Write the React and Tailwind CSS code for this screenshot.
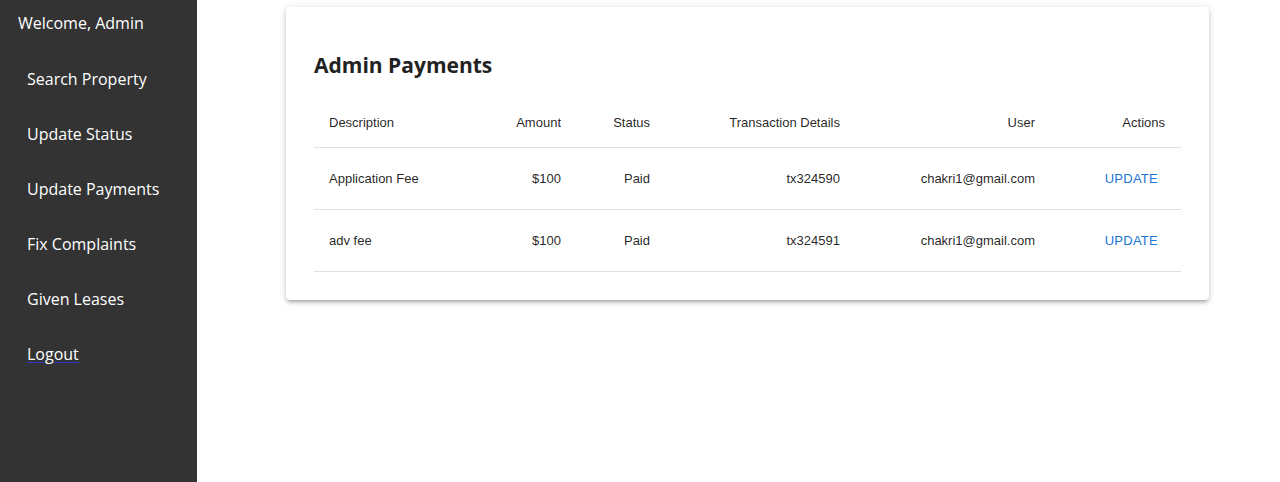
const navItems = [
  "Search Property",
  "Update Status",
  "Update Payments",
  "Fix Complaints",
  "Given Leases",
];

const payments = [
  { id: 1, description: "Application Fee", amount: "$100", status: "Paid", tx: "tx324590", user: "chakri1@gmail.com" },
  { id: 2, description: "adv fee", amount: "$100", status: "Paid", tx: "tx324591", user: "chakri1@gmail.com" },
];

const cols = "grid grid-cols-[166px_96px_89px_190px_195px_130px]";

const App = () => {
  return (
    <div className="min-h-screen h-[482px] flex bg-white font-['Open_Sans',sans-serif]">
      <aside className="w-[197px] shrink-0 bg-[#333333] text-white text-[16px]">
        <div className="pl-[18px] pt-[11px] h-[51px]">Welcome, Admin</div>
        <nav className="flex flex-col">
          {navItems.map((item) => (
            <div key={item} className="pl-[27px] h-[55px] flex items-center">
              {item}
            </div>
          ))}
          <div className="pl-[27px] h-[55px] flex items-center">
            <span className="underline decoration-1 decoration-[#3535d0] underline-offset-2">Logout</span>
          </div>
        </nav>
      </aside>

      <main className="flex-1">
        <div className="ml-[89px] mt-[7px] w-[923px] bg-white rounded-[4px] shadow-[0_3px_3px_-2px_rgba(0,0,0,0.2),0_3px_4px_0_rgba(0,0,0,0.14),0_1px_8px_0_rgba(0,0,0,0.12)] px-[28px] pt-[42px] pb-[28px]">
          <h1 className="text-[21px] font-bold text-[#222] leading-[32px] mb-[16px]">Admin Payments</h1>
          <div className="font-['Liberation_Sans',Arial,sans-serif] text-[13px] text-[rgba(0,0,0,0.87)]">
            <div className={`${cols} h-[51px] pt-[1px] items-center border-b border-[#e0e0e0]`}>
              <div className="px-[15px]">Description</div>
              <div className="px-[15px] text-right">Amount</div>
              <div className="px-[15px] text-right">Status</div>
              <div className="px-[15px] text-right">Transaction Details</div>
              <div className="px-[15px] text-right">User</div>
              <div className="px-[15px] text-right">Actions</div>
            </div>
            {payments.map((p) => (
              <div key={p.id} className={`${cols} h-[62px] pt-[1px] items-center border-b border-[#e0e0e0]`}>
                <div className="px-[15px]">{p.description}</div>
                <div className="px-[15px] text-right">{p.amount}</div>
                <div className="px-[15px] text-right">{p.status}</div>
                <div className="px-[15px] text-right">{p.tx}</div>
                <div className="px-[15px] text-right">{p.user}</div>
                <div className="pr-[14px] flex justify-end">
                  <button className="px-[8px] py-[6px] text-[#1976d2] text-[13px] tracking-[0.02em] font-medium uppercase rounded">
                    Update
                  </button>
                </div>
              </div>
            ))}
          </div>
        </div>
      </main>
    </div>
  );
};

export default App;
